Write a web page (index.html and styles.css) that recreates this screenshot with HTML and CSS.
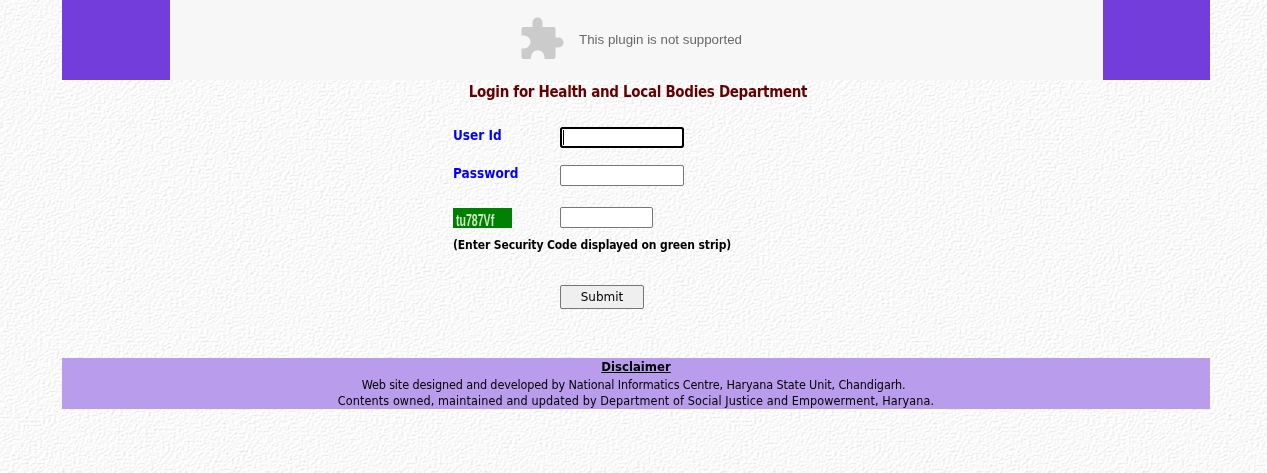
FILE: index.html
```html
<!DOCTYPE html>
<html lang="en">
<head>
<meta charset="utf-8">
<title>Login</title>
<link rel="stylesheet" href="styles.css">
</head>
<body>
<svg class="paper" width="1267" height="473" aria-hidden="true">
  <filter id="paper-grain" x="0" y="0" width="100%" height="100%">
    <feTurbulence type="fractalNoise" baseFrequency="0.36 0.5" numOctaves="3" seed="7"/>
    <feDiffuseLighting lighting-color="#ffffff" surfaceScale="0.62" diffuseConstant="1.08">
      <feDistantLight azimuth="225" elevation="62"/>
    </feDiffuseLighting>
  </filter>
  <rect width="1267" height="473" filter="url(#paper-grain)"/>
</svg>
<div class="page">
  <header class="banner">
    <div class="side"></div>
    <div class="plugin">
      <svg class="puzzle" width="44" height="44" viewBox="0 0 44 44" aria-hidden="true">
        <path d="M2.500 10H11.500V5.500A5 5 0 0 1 21.500 5.500V10H32.500A2 2 0 0 1 34.500 12V20.500H37.500A5 5 0 0 1 37.500 30.500H34.500V40A2 2 0 0 1 32.500 42H23.500V40A6.500 6.500 0 0 0 10 40V42H2.500A2 2 0 0 1 .5 40V31.500H3A6.500 6.500 0 0 0 3 18.500H.5V12A2 2 0 0 1 2.500 10Z"/>
      </svg>
      <span class="plugin-text">This plugin is not supported</span>
    </div>
    <div class="side"></div>
  </header>
  <h1 class="title">Login for Health and Local Bodies Department</h1>
  <form class="login">
    <label class="label" for="uid">User Id</label>
    <div class="field-wrap">
      <input class="field field-focus" id="uid" type="text">
      <span class="caret"></span>
    </div>
    <label class="label label-pass" for="pwd">Password</label>
    <input class="field field-pass" id="pwd" type="password">
    <div class="captcha"><span class="captcha-text">tu787Vf</span></div>
    <input class="field field-code" type="text" aria-label="Security code">
    <p class="hint">(Enter Security Code displayed on green strip)</p>
    <button class="submit" type="button">Submit</button>
  </form>
  <footer class="foot">
    <div class="foot-head">Disclaimer</div>
    <div class="foot-one">Web site designed and developed by National Informatics Centre, Haryana State Unit, Chandigarh.</div>
    <div class="foot-two">Contents owned, maintained and updated by Department of Social Justice and Empowerment, Haryana.</div>
  </footer>
</div>
</body>
</html>
```
FILE: styles.css
```css
html, body { margin: 0; padding: 0; }
body {
  height: 473px;
  overflow: hidden;
  background: #f4f4f4;
  font-family: "DejaVu Sans Condensed", "DejaVu Sans", Verdana, sans-serif;
  color: #000;
}
.paper { position: fixed; left: 0; top: 0; z-index: -1; }
.page { width: 1148px; margin-left: 62px; }
.banner { display: flex; height: 80px; }
.side { width: 108px; background: #733ddb; }
.side:last-child { width: 107px; }
.plugin {
  flex: 1;
  background: #f7f7f7;
  display: flex;
  align-items: flex-start;
  padding-left: 351px;
  padding-top: 17px;
  box-sizing: border-box;
}
.puzzle { fill: #cbcbcb; flex: none; }
.plugin-text {
  margin: 14px 0 0 14px;
  font: 13.33px/18px "Liberation Sans", Arial, sans-serif;
  color: #686868;
}
.title {
  margin: 3px 0 0;
  text-align: center;
  padding-left: 4px;
  font-size: 15px;
  line-height: 19px;
  letter-spacing: -0.32px;
  color: #660000;
}
.login {
  display: grid;
  grid-template-columns: 107px 124px;
  margin: 25px 0 0 391px;
  align-content: start;
  width: 320px;
}
.label {
  color: #0000ff;
  font-weight: bold;
  font-size: 13.5px;
  line-height: 16px;
  margin-top: 0;
}
.label-pass { margin-top: 17px; }
.field-wrap { position: relative; height: 21px; }
.caret {
  position: absolute;
  left: 3px;
  top: 3px;
  width: 1px;
  height: 15px;
  background: #000;
}
.field {
  box-sizing: border-box;
  height: 21px;
  padding: 1px 2px;
  border: 1px solid #767676;
  border-radius: 2px;
  background: #fff;
}
.field-focus { width: 124px; outline: 2px solid #000; outline-offset: -2px; border-color: #000; border-radius: 3px; }
.field-pass { width: 124px; margin-top: 17px; }
.field-code { width: 93px; margin-top: 21px; }
.captcha {
  box-sizing: border-box;
  width: 59px;
  height: 20px;
  margin-top: 22px;
  padding-top: 3px;
  background: #008000;
}
.captcha-text {
  display: inline-block;
  margin-left: 3px;
  transform: scaleX(0.66);
  transform-origin: left center;
  font: bold 16px/17px "Liberation Sans", Arial, sans-serif;
  color: #cfe6c4;
  white-space: nowrap;
  filter: blur(0.4px);
}
.hint {
  grid-column: 1 / span 2;
  margin: 8px 0 0;
  font-size: 12px;
  font-weight: bold;
  line-height: 18px;
  letter-spacing: -0.11px;
  white-space: nowrap;
}
.submit {
  grid-column: 2;
  width: 84px;
  height: 24px;
  margin-top: 31px;
  padding: 0;
  border: 1px solid #767676;
  border-radius: 2px;
  background: #efefef;
  font-family: "DejaVu Sans", Verdana, sans-serif;
  font-size: 12px;
  color: #000;
}
.foot {
  margin-top: 49px;
  height: 51px;
  background: #b99cec;
  text-align: center;
  font-size: 12.5px;
  line-height: 16px;
}
.foot-one { letter-spacing: -0.13px; padding-right: 5px; }
.foot-two { letter-spacing: 0.1px; }
.foot-head {
  font-weight: bold;
  font-size: 13px;
  line-height: 17px;
  text-decoration: underline;
  margin-bottom: 2px;
}
```
